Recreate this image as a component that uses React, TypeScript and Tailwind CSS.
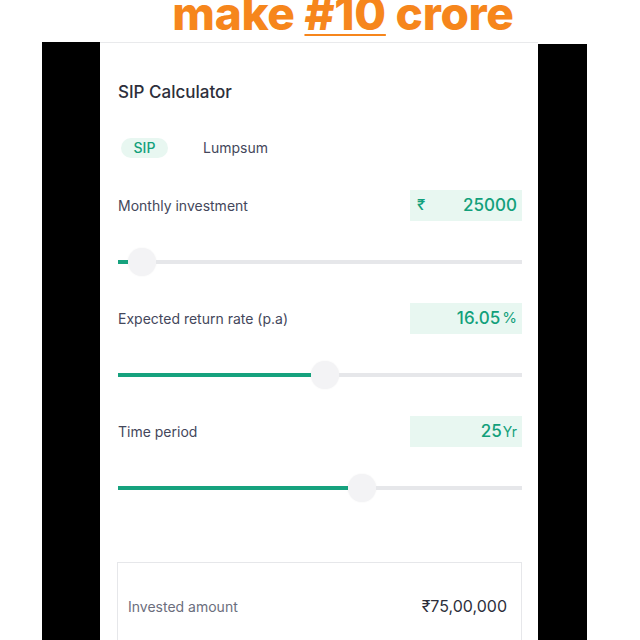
const FONT = { fontFamily: "Inter, 'Noto Sans', sans-serif" };

function ValueBox({ children }: { children: React.ReactNode }) {
  return (
    <div className="flex h-[31px] w-[112px] items-center bg-[#e8f7f1] pr-[5px] pl-[7px] text-[17px] font-medium text-[#12a07b]">
      {children}
    </div>
  );
}

function Slider({ fill }: { fill: string }) {
  return (
    <div className="flex h-7 items-center">
      <div className={`h-1 bg-[#16a27e] ${fill}`} />
      <div className="h-7 w-7 shrink-0 rounded-full bg-[#f3f3f5] shadow-[0_0_2px_rgba(0,0,0,0.06)]" />
      <div className="h-1 flex-1 bg-[#e6e7ea]" />
    </div>
  );
}

export default function App() {
  return (
    <div className="h-[640px] w-[640px] overflow-hidden bg-white" style={FONT}>
      {/* Titlu tăiat sus */}
      <div className="flex h-[42px] justify-center">
        <h1 className="-mt-[16px] ml-[46px] text-[46px] leading-[58px] font-extrabold tracking-[-0.3px] text-[#f6861c]">
          make <span className="underline decoration-2 underline-offset-[4px]">#10</span> crore
        </h1>
      </div>

      <div className="flex h-[598px]">
        <div className="ml-[42px] w-[58px] bg-black" />
        <div className="w-[438px] border-t border-[#e9eaec] bg-white pr-4 pl-[18px] pt-[37px]">
          <h2 className="text-[17px] leading-6 font-medium text-[#2d2f3b]">SIP Calculator</h2>

          <div className="mt-[33px] flex items-center text-[14px]">
            <span className="ml-[3px] flex h-5 w-[47px] items-center justify-center rounded-full bg-[#e8f7f1] font-medium text-[#12a07b]">
              SIP
            </span>
            <span className="ml-[35px] text-[#44475b]">Lumpsum</span>
          </div>

          <div className="mt-[32px] flex items-center justify-between">
            <span className="text-[14px] text-[#44475b]">Monthly investment</span>
            <ValueBox>
              <span className="text-[15px]">₹</span>
              <span className="ml-auto">25000</span>
            </ValueBox>
          </div>
          <div className="mt-[27px]">
            <Slider fill="w-[10px]" />
          </div>

          <div className="mt-[27px] flex items-center justify-between">
            <span className="text-[14px] text-[#44475b]">Expected return rate (p.a)</span>
            <ValueBox>
              <span className="ml-auto">16.05</span>
              <span className="ml-[2px] text-[15px] font-normal">%</span>
            </ValueBox>
          </div>
          <div className="mt-[27px]">
            <Slider fill="w-[193px]" />
          </div>

          <div className="mt-[27px] flex items-center justify-between">
            <span className="text-[14px] text-[#44475b]">Time period</span>
            <ValueBox>
              <span className="ml-auto">25</span>
              <span className="ml-[1px] text-[14px] font-normal">Yr</span>
            </ValueBox>
          </div>
          <div className="mt-[27px]">
            <Slider fill="w-[230px]" />
          </div>

          <div className="mt-[60px] -ml-px h-[120px] border border-[#e6e7ea] px-[10px] pt-[31px]">
            <div className="flex items-center justify-between">
              <span className="text-[14px] text-[#6b6e7d]">Invested amount</span>
              <span className="pr-[4px] text-[16px] text-[#2d2f3b]">₹75,00,000</span>
            </div>
          </div>
        </div>
        <div className="mt-[2px] w-[49px] bg-black" />
      </div>
    </div>
  );
}
